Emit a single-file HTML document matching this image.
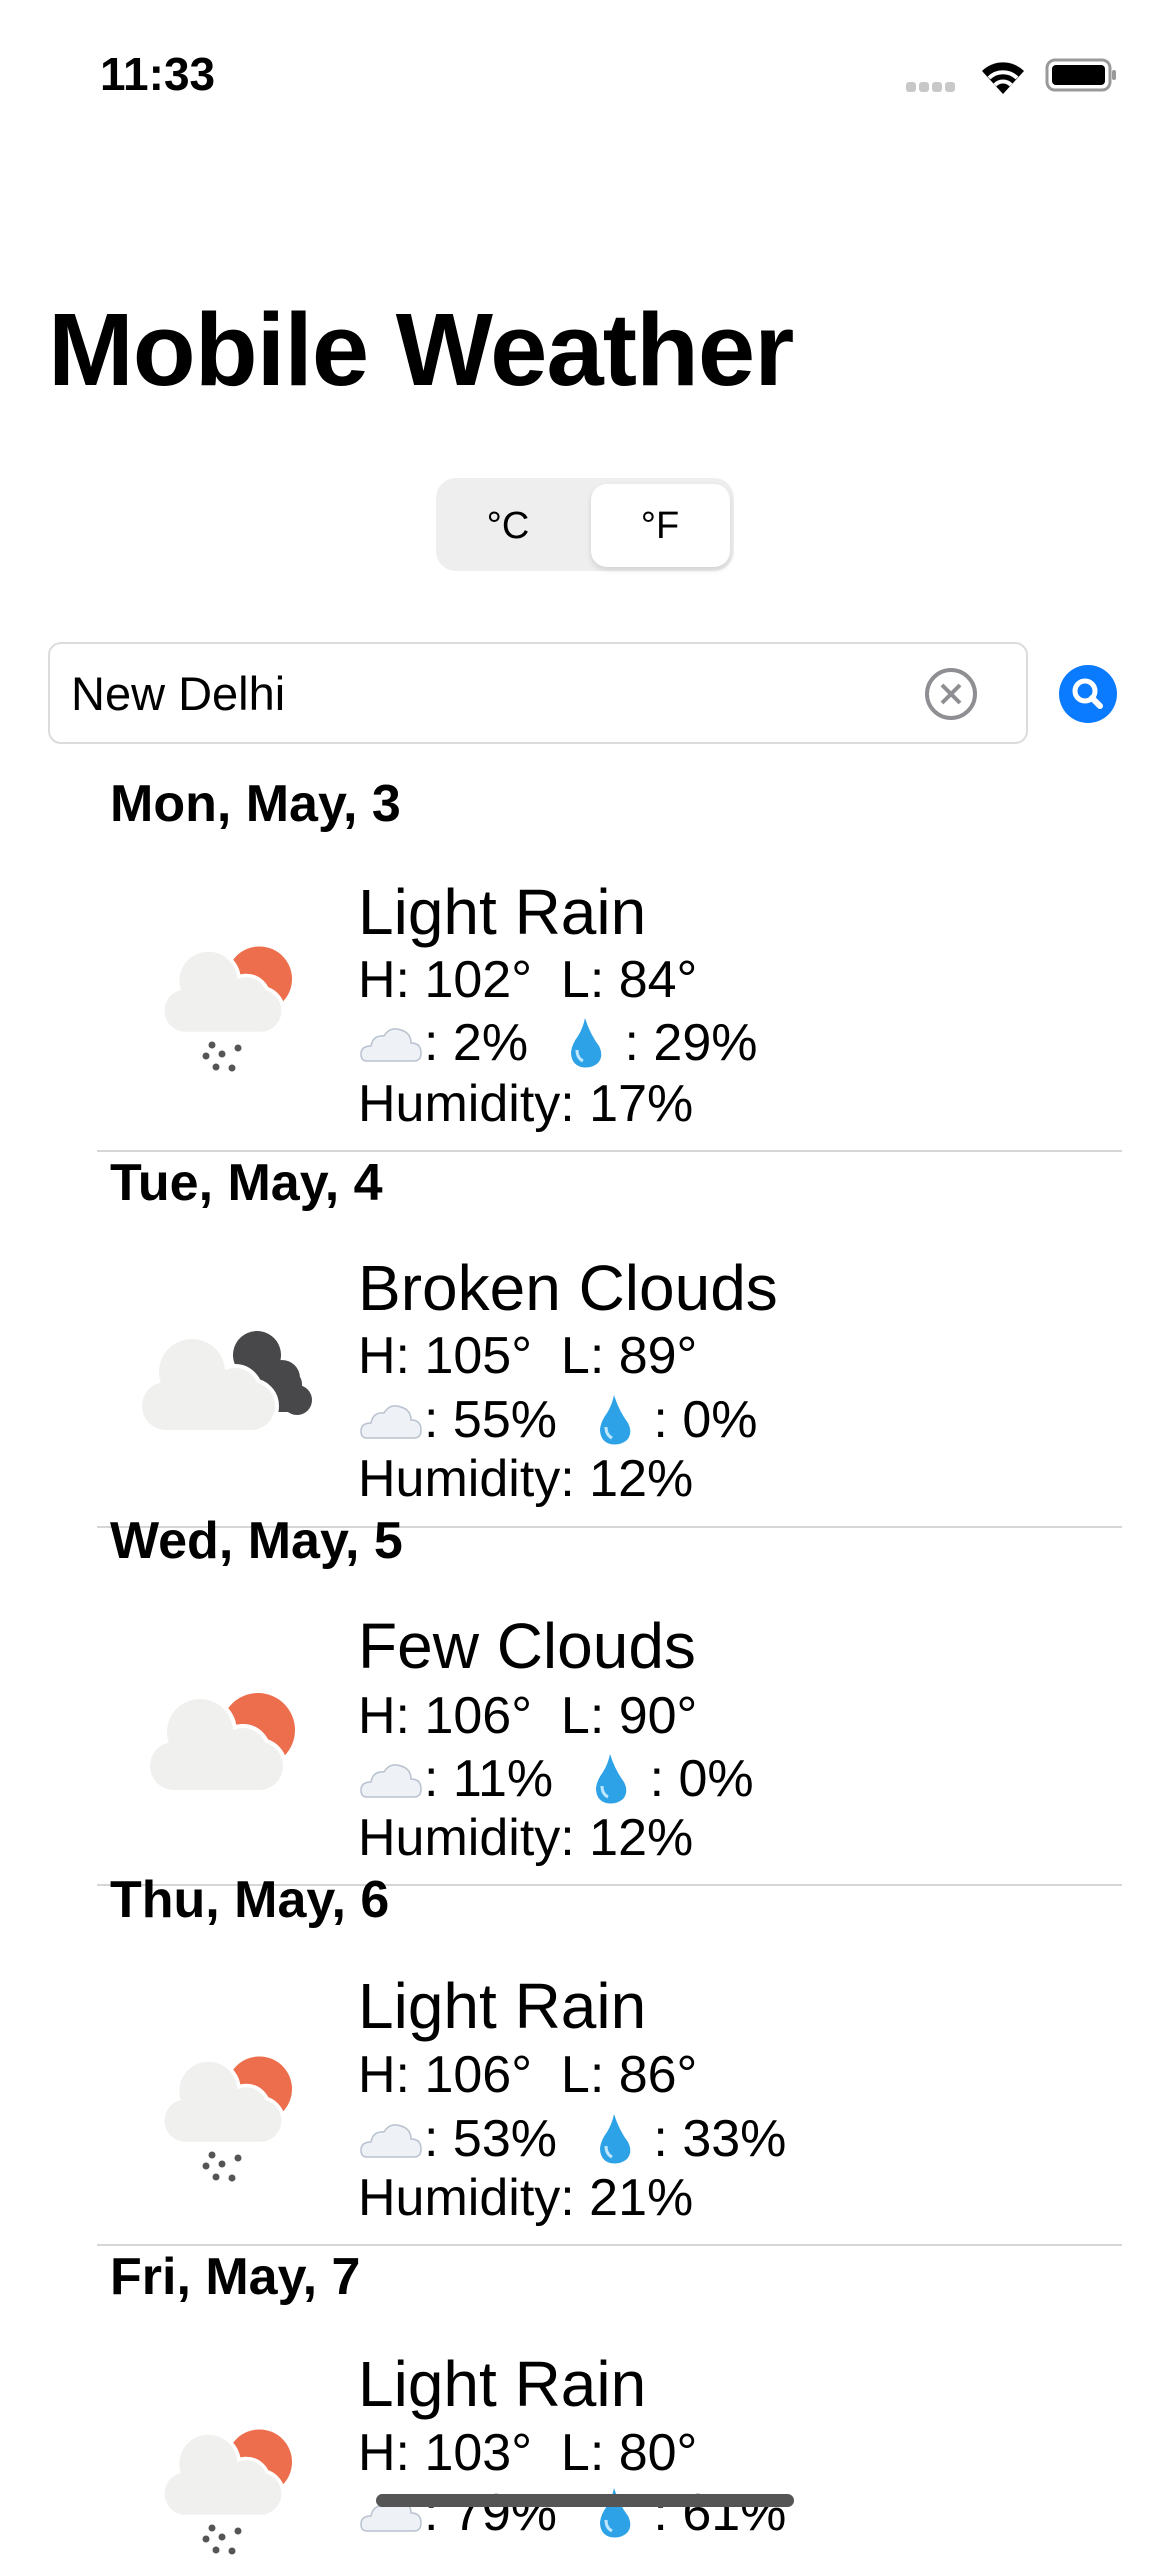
<!DOCTYPE html>
<html><head><meta charset="utf-8">
<style>
*{margin:0;padding:0;box-sizing:border-box}
body{width:1170px;height:2532px;background:#fff;position:relative;overflow:hidden;font-family:"Liberation Sans",sans-serif;color:#000}
.a{position:absolute;white-space:pre}
.date{left:110px;font-size:52px;font-weight:bold;height:60px;line-height:60px}
.title{left:358px;font-size:64px;height:76px;line-height:76px}
.ln{left:358px;font-size:52px;height:62px;line-height:62px;display:flex;align-items:center}
.sep{position:absolute;left:97px;width:1025px;height:2px;background:#d6d6d6}
.ic{position:absolute}
</style></head><body>
<svg width="0" height="0" style="position:absolute">
<defs>
<g id="cl"><rect x="5" y="62" width="133" height="48" rx="24" fill="#f0f0ef"/><circle cx="55" cy="52" r="33" fill="#f0f0ef"/><circle cx="98" cy="72" r="24" fill="#f0f0ef"/></g>
<g id="clo"><rect x="5" y="62" width="133" height="48" rx="24" fill="#fff" stroke="#fff" stroke-width="8"/><circle cx="55" cy="52" r="33" fill="#fff" stroke="#fff" stroke-width="8"/><circle cx="98" cy="72" r="24" fill="#fff" stroke="#fff" stroke-width="8"/></g>
<g id="few"><circle cx="113" cy="50" r="37" fill="#ec6e4c"/><use href="#clo"/><use href="#cl"/></g>
<g id="rain"><g transform="translate(0,0) scale(0.88)"><use href="#few"/></g>
<g fill="#555"><circle cx="52" cy="110" r="3.5"/><circle cx="46" cy="121" r="3.5"/><circle cx="62" cy="119" r="3.5"/><circle cx="78" cy="113" r="3.5"/><circle cx="56" cy="132" r="3.5"/><circle cx="72" cy="133" r="3.5"/></g></g>
<g id="broken"><g fill="#48484a"><circle cx="115" cy="35" r="24"/><circle cx="140" cy="58" r="18"/><circle cx="155" cy="80" r="15"/><rect x="100" y="50" width="60" height="42" rx="14"/></g>
<g transform="translate(-5,0)"><use href="#clo"/><use href="#cl"/></g></g>
<g id="cloud"><path d="M8 40 Q2 40 2 33 Q2 25 12 25 Q14 14 25 15 Q31 5 42 9 Q52 12 52 22 Q62 22 62 32 Q62 40 55 40 Z" fill="#eef1f6" stroke="#b9c2cf" stroke-width="1.5"/></g>
<g id="drop"><path d="M19 2 Q24 18 33 30 Q38 40 32 47 Q25 53 15 51 Q5 48 5 36 Q6 28 12 20 Q17 12 19 2Z" fill="#2ea2e6"/><path d="M11 34 Q11 42 17 45" stroke="#bfe6ff" stroke-width="3" fill="none"/></g>
</defs></svg>

<div class="a" style="left:100px;top:46px;font-size:46px;font-weight:bold;line-height:56px">11:33</div>
<div class="ic" style="left:906px;top:80px"><svg width="50" height="14"><g fill="#c8c8c8"><rect x="0" y="2" width="10" height="10" rx="3"/><rect x="13" y="2" width="10" height="10" rx="3"/><rect x="26" y="2" width="10" height="10" rx="3"/><rect x="39" y="2" width="10" height="10" rx="3"/></g></svg></div>
<div class="ic" style="left:978px;top:56px"><svg width="50" height="40" viewBox="0 0 50 40"><path d="M25 38 L4 15 A30 30 0 0 1 46 15 Z" fill="#000"/><path d="M11 22 A20 20 0 0 1 39 22" stroke="#fff" stroke-width="4" fill="none"/><path d="M17 29 A11 11 0 0 1 33 29" stroke="#fff" stroke-width="4" fill="none"/></svg></div>
<div class="ic" style="left:1045px;top:58px"><svg width="72" height="34"><rect x="2" y="2" width="63" height="30" rx="8" fill="none" stroke="#999" stroke-width="3"/><rect x="7" y="7" width="53" height="20" rx="4" fill="#000"/><rect x="67" y="12" width="4" height="10" rx="2" fill="#999"/></svg></div>

<div class="a" style="left:48px;top:285px;font-size:103px;font-weight:bold;line-height:130px;letter-spacing:-1px">Mobile Weather</div>

<div class="a" style="left:436px;top:478px;width:298px;height:93px;border-radius:20px;background:#eeeeef"></div>
<div class="a" style="left:591px;top:484px;width:139px;height:83px;border-radius:16px;background:#fff;box-shadow:0 3px 6px rgba(0,0,0,.12)"></div>
<div class="a" style="left:468px;top:504px;width:80px;text-align:center;font-size:38px;line-height:44px">°C</div>
<div class="a" style="left:620px;top:504px;width:80px;text-align:center;font-size:38px;line-height:44px">°F</div>

<div class="a" style="left:48px;top:642px;width:980px;height:102px;border:2px solid #dcdcdc;border-radius:13px"></div>
<div class="a" style="left:71px;top:665px;font-size:47px;line-height:58px">New Delhi</div>
<div class="ic" style="left:923px;top:666px"><svg width="56" height="56"><circle cx="28" cy="28" r="24" fill="none" stroke="#8e8e93" stroke-width="4"/><path d="M19 19 L37 37 M37 19 L19 37" stroke="#8e8e93" stroke-width="4"/></svg></div>
<div class="ic" style="left:1059px;top:665px"><svg width="58" height="58"><circle cx="29" cy="29" r="29" fill="#0a7aff"/><circle cx="26" cy="26" r="10" fill="none" stroke="#fff" stroke-width="5"/><path d="M33 33 L41 41" stroke="#fff" stroke-width="6" stroke-linecap="round"/></svg></div>

<!-- Row 1 -->
<div class="a date" style="top:774px">Mon, May, 3</div>
<svg class="ic" style="left:160px;top:935px" width="150" height="150"><use href="#rain"/></svg>
<div class="a title" style="top:874px">Light Rain</div>
<div class="a ln" style="top:949px">H: 102°  L: 84°</div>
<div class="a ln" style="top:1012px"><svg width="66" height="44" viewBox="0 0 64 44"><use href="#cloud"/></svg>: 2%<svg style="margin-left:38px;margin-right:6px" width="38" height="56" viewBox="0 0 38 54"><use href="#drop"/></svg> : 29%</div>
<div class="a ln" style="top:1073px">Humidity: 17%</div>
<div class="sep" style="top:1150px"></div>

<!-- Row 2 -->
<div class="a date" style="top:1153px">Tue, May, 4</div>
<svg class="ic" style="left:142px;top:1320px" width="170" height="120"><use href="#broken"/></svg>
<div class="a title" style="top:1250px">Broken Clouds</div>
<div class="a ln" style="top:1325px">H: 105°  L: 89°</div>
<div class="a ln" style="top:1389px"><svg width="66" height="44" viewBox="0 0 64 44"><use href="#cloud"/></svg>: 55%<svg style="margin-left:38px;margin-right:6px" width="38" height="56" viewBox="0 0 38 54"><use href="#drop"/></svg> : 0%</div>
<div class="a ln" style="top:1448px">Humidity: 12%</div>
<div class="sep" style="top:1526px"></div>

<!-- Row 3 -->
<div class="a date" style="top:1511px">Wed, May, 5</div>
<svg class="ic" style="left:145px;top:1680px" width="150" height="120"><use href="#few"/></svg>
<div class="a title" style="top:1608px">Few Clouds</div>
<div class="a ln" style="top:1685px">H: 106°  L: 90°</div>
<div class="a ln" style="top:1748px"><svg width="66" height="44" viewBox="0 0 64 44"><use href="#cloud"/></svg>: 11%<svg style="margin-left:38px;margin-right:6px" width="38" height="56" viewBox="0 0 38 54"><use href="#drop"/></svg> : 0%</div>
<div class="a ln" style="top:1807px">Humidity: 12%</div>
<div class="sep" style="top:1884px"></div>

<!-- Row 4 -->
<div class="a date" style="top:1870px">Thu, May, 6</div>
<svg class="ic" style="left:160px;top:2045px" width="150" height="150"><use href="#rain"/></svg>
<div class="a title" style="top:1968px">Light Rain</div>
<div class="a ln" style="top:2044px">H: 106°  L: 86°</div>
<div class="a ln" style="top:2108px"><svg width="66" height="44" viewBox="0 0 64 44"><use href="#cloud"/></svg>: 53%<svg style="margin-left:38px;margin-right:6px" width="38" height="56" viewBox="0 0 38 54"><use href="#drop"/></svg> : 33%</div>
<div class="a ln" style="top:2167px">Humidity: 21%</div>
<div class="sep" style="top:2244px"></div>

<!-- Row 5 -->
<div class="a date" style="top:2247px">Fri, May, 7</div>
<svg class="ic" style="left:160px;top:2418px" width="150" height="150"><use href="#rain"/></svg>
<div class="a title" style="top:2346px">Light Rain</div>
<div class="a ln" style="top:2422px">H: 103°  L: 80°</div>
<div class="a ln" style="top:2482px"><svg width="66" height="44" viewBox="0 0 64 44"><use href="#cloud"/></svg>: 79%<svg style="margin-left:38px;margin-right:6px" width="38" height="56" viewBox="0 0 38 54"><use href="#drop"/></svg> : 61%</div>

<div class="a" style="left:376px;top:2494px;width:418px;height:13px;border-radius:7px;background:#555"></div>
</body></html>
